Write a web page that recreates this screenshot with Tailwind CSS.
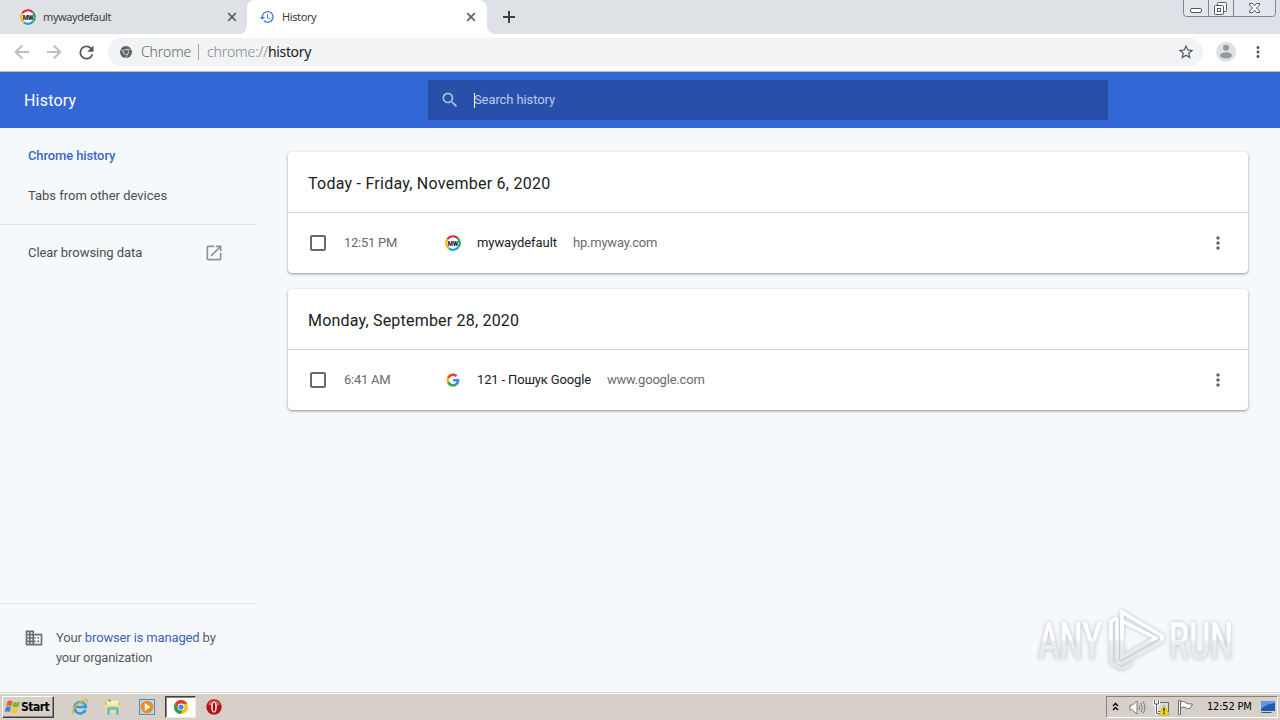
<!DOCTYPE html>
<html lang="en">
<head>
    <meta charset="UTF-8">
    <meta name="viewport" content="width=device-width, initial-scale=1.0">
    <title>History</title>
    <script src="https://cdn.jsdelivr.net/npm/@tailwindcss/browser@4"></script>
</head>
<body class="w-[1280px] h-[720px] overflow-hidden flex flex-col bg-[#f6f9fc] font-['Roboto',sans-serif] text-[13px] text-[#5a5a5a]">
    <!-- Shared icons -->
    <svg class="hidden">
        <symbol id="mw" viewBox="0 0 16 16">
            <circle cx="8" cy="8" r="6.9" fill="#fff"/>
            <g fill="none" stroke-width="2.2">
                <path d="M2.4 4.2A6.8 6.8 0 0 1 12.8 3.2" stroke="#e0203c"/>
                <path d="M12.8 3.2A6.8 6.8 0 0 1 13.2 12.4" stroke="#2fa45a"/>
                <path d="M13.2 12.4A6.8 6.8 0 0 1 3.8 13.3" stroke="#1a9fdc"/>
                <path d="M3.8 13.3A6.8 6.8 0 0 1 2.4 4.2" stroke="#f8b91c"/>
            </g>
            <text x="8" y="10.5" text-anchor="middle" textLength="10.5" lengthAdjust="spacingAndGlyphs" font-family="Roboto, sans-serif" font-weight="900" font-size="7" fill="#1d2733">MW</text>
        </symbol>
        <symbol id="dots" viewBox="0 0 24 24">
            <path d="M12 8c1.1 0 2-.9 2-2s-.9-2-2-2-2 .9-2 2 .9 2 2 2zm0 2c-1.1 0-2 .9-2 2s.9 2 2 2 2-.9 2-2-.9-2-2-2zm0 6c-1.1 0-2 .9-2 2s.9 2 2 2 2-.9 2-2-.9-2-2-2z"/>
        </symbol>
        <symbol id="close" viewBox="0 0 10 10">
            <path d="M1.2 1.2l7.6 7.6M8.8 1.2L1.2 8.8" fill="none" stroke="#5f6368" stroke-width="1.7"/>
        </symbol>
    </svg>

    <!-- Tab strip -->
    <div class="h-[34px] shrink-0 flex bg-[#dee1e6] font-['Noto_Sans',sans-serif] text-[11px] tracking-[-0.4px] text-[#3c4043]">
        <div class="w-[247px] flex items-center pl-5 pr-[10px]">
            <svg class="size-4"><use href="#mw"/></svg>
            <span class="ml-[7px] grow whitespace-nowrap">mywaydefault</span>
            <svg class="size-[10px]"><use href="#close"/></svg>
        </div>
        <div class="relative w-[240px] flex items-center pl-3 pr-[11px] bg-white rounded-t-lg">
            <svg class="absolute -left-2 bottom-0 size-2" viewBox="0 0 8 8"><path d="M8 0v8H0a8 8 0 0 0 8-8z" fill="#fff"/></svg>
            <svg class="absolute -right-2 bottom-0 size-2" viewBox="0 0 8 8"><path d="M0 0v8h8a8 8 0 0 1-8-8z" fill="#fff"/></svg>
            <svg class="size-4" viewBox="0 0 24 24" fill="#3b78e0"><path d="M13 3a9 9 0 0 0-9 9H1l3.89 3.89.07.14L9 12H6c0-3.87 3.13-7 7-7s7 3.13 7 7-3.13 7-7 7c-1.93 0-3.68-.79-4.94-2.06l-1.42 1.42A8.954 8.954 0 0 0 13 21a9 9 0 0 0 0-18zm-1 5v5l4.28 2.54.72-1.21-3.5-2.08V8H12z"/></svg>
            <span class="ml-[7px] grow whitespace-nowrap">History</span>
            <svg class="size-[10px]"><use href="#close"/></svg>
        </div>
        <svg class="w-3 h-[34px] ml-4" viewBox="0 0 12 34"><path d="M6 11v12M0 17h12" stroke="#3c4043" stroke-width="2"/></svg>
        <svg class="ml-auto mr-[3px] w-[94px] h-[18px]" viewBox="0 0 94 18" fill="none">
            <path d="M.5-2v15.500a3 3 0 0 0 3 3h86a3 3 0 0 0 3-3V-2" fill="#e3e6ea" stroke="#81868f"/>
            <path d="M25.500 0v16M50.500 0v16" stroke="#81868f"/>
            <g fill="#fff" stroke="#505766">
                <rect x="7.500" y="8.500" width="11" height="4" rx="1.500"/>
                <rect x="34.500" y="2.500" width="9" height="9" rx="1"/>
                <rect x="31.500" y="5.500" width="9" height="9" rx="1"/>
                <rect x="34.500" y="8.500" width="3" height="3"/>
                <path d="M66.500 3.500h3l2 2.300 2-2.300h3v1.500l-3 3 3 3v1.500h-3l-2-2.300-2 2.300h-3V11l3-3-3-3z"/>
            </g>
        </svg>
    </div>

    <!-- Toolbar -->
    <div class="h-[38px] shrink-0 flex items-center pl-[14px] pr-[14px] pb-px bg-white border-b border-[#b6bfd0]">
        <svg class="size-4" viewBox="0 0 16 16" fill="none" stroke="#bbbdc0" stroke-width="1.900"><path d="M15 8H2M8.200 1.500L1.700 8l6.500 6.500"/></svg>
        <svg class="size-4 ml-4" viewBox="0 0 16 16" fill="none" stroke="#bbbdc0" stroke-width="1.900"><path d="M1 8h13M7.800 1.500L14.300 8l-6.500 6.500"/></svg>
        <svg class="size-[21px] ml-[13.5px]" viewBox="0 0 24 24" fill="#55585d"><path d="M17.650 6.350A7.958 7.958 0 0 0 12 4a8 8 0 1 0 7.730 10h-2.080A5.990 5.990 0 0 1 12 18c-3.310 0-6-2.690-6-6s2.690-6 6-6c1.660 0 3.140.69 4.220 1.780L13 11h7V4l-2.350 2.350z"/></svg>
        <div class="ml-[11.5px] w-[1095px] h-7 flex items-center pl-3 pr-2 rounded-full bg-[#f1f3f4] font-['Noto_Sans',sans-serif] text-[14px] font-light text-[#5f6368]">
            <svg class="size-3" viewBox="0 0 12 12"><circle cx="6" cy="6" r="6" fill="#5f6368"/><g fill="none" stroke="#d8dadc" stroke-width=".8"><circle cx="6" cy="6" r="2.600"/><path d="M6 3.400h5.300M3.700 7.300L1.200 3M8.200 7.400L5.700 11.800"/></g></svg>
            <span class="ml-[9px] -mt-0.5 whitespace-nowrap w-[51px] tracking-[-0.1px]">Chrome</span>
            <span class="ml-[6px] mr-2 w-px h-4 bg-[#a3a6aa]"></span>
            <span class="-mt-0.5 grow whitespace-nowrap tracking-[-0.1px] text-[#80868b]">chrome://<span class="tracking-[-0.35px] text-[#202124] font-normal">history</span></span>
            <svg class="size-[18px]" viewBox="0 0 24 24" fill="#55585d"><path d="M22 9.240l-7.190-.62L12 2 9.190 8.630 2 9.240l5.460 4.730L5.820 21 12 17.270 18.180 21l-1.630-7.030L22 9.240zM12 15.400l-3.760 2.270 1-4.280-3.320-2.880 4.380-.38L12 6.100l1.710 4.040 4.380.38-3.320 2.880 1 4.280L12 15.400z"/></svg>
        </div>
        <svg class="size-5 ml-[13px]" viewBox="0 0 20 20"><circle cx="10" cy="10" r="10" fill="#dfe0e1"/><circle cx="10" cy="5.800" r="3" fill="#96999c"/><ellipse cx="10" cy="13.300" rx="6" ry="3" fill="#96999c"/></svg>
        <svg class="size-[18px] ml-auto -mr-px fill-[#55585d]"><use href="#dots"/></svg>
    </div>

    <!-- App header -->
    <header class="h-14 shrink-0 flex items-center bg-[#3367d6] text-white">
        <h1 class="w-[428px] pl-6 pt-0.5 text-[16px] tracking-[0.2px]">History</h1>
        <div class="w-[680px] h-10 flex items-center pl-3 bg-[#2950a8] text-[#b9cbee]">
            <svg class="size-5" viewBox="0 0 24 24" fill="#a9bfe9"><path d="M15.500 14h-.79l-.28-.27A6.471 6.471 0 0 0 16 9.500 6.500 6.500 0 1 0 9.500 16c1.610 0 3.090-.59 4.230-1.570l.27.28v.79l5 4.990L20.490 19l-4.990-5zm-6 0C7.010 14 5 11.990 5 9.500S7.010 5 9.500 5 14 7.010 14 9.500 11.990 14 9.500 14z"/></svg>
            <span class="ml-[14px] w-px h-[15px] bg-white"></span>
            <span class="-ml-px whitespace-nowrap tracking-[-0.1px]">Search history</span>
        </div>
    </header>

    <div class="grow min-h-0 flex">
        <!-- Sidebar -->
        <aside class="w-[257px] flex flex-col">
            <nav class="pt-2 pb-2 border-b border-[#e0e3e7]">
                <a class="h-10 flex items-center pl-7 font-medium tracking-[-0.12px] text-[#3a68c4]">Chrome history</a>
                <a class="h-10 flex items-center pl-7 tracking-[-0.02px] text-[#4a4d51]">Tabs from other devices</a>
            </nav>
            <a class="h-10 mt-2 flex items-center justify-between pl-7 pr-[33px] tracking-[-0.06px] text-[#4a4d51]">
                <span>Clear browsing data</span>
                <svg class="size-5" viewBox="0 0 24 24" fill="#909397"><path d="M19 19H5V5h7V3H5a2 2 0 0 0-2 2v14a2 2 0 0 0 2 2h14c1.100 0 2-.9 2-2v-7h-2v7zM14 3v2h3.590l-9.830 9.830 1.410 1.410L19 6.410V10h2V3h-7z"/></svg>
            </a>
            <div class="mt-auto h-[89px] flex pt-6 pl-6 border-t border-[#e5e8eb]">
                <svg class="size-5" viewBox="0 0 24 24" fill="#6b6f74"><path d="M12 7V3H2v18h20V7H12zM6 19H4v-2h2v2zm0-4H4v-2h2v2zm0-4H4V9h2v2zm0-4H4V5h2v2zm4 12H8v-2h2v2zm0-4H8v-2h2v2zm0-4H8V9h2v2zm0-4H8V5h2v2zm10 12h-8v-2h2v-2h-2v-2h2v-2h-2V9h8v10zm-2-8h-2v2h2v-2zm0 4h-2v2h2v-2z"/></svg>
                <p class="ml-3 leading-5 whitespace-nowrap tracking-[-0.15px]">Your <a class="text-[#3b62b8]">browser is managed</a> by<br><span class="tracking-[-0.24px]">your organization</span></p>
            </div>
        </aside>

        <!-- History cards -->
        <main class="relative grow pl-[31px] pt-6">
            <section class="w-[960px] h-[121px] mb-4 bg-white rounded-[4px] shadow-[0_1px_2px_rgba(60,64,67,.4),0_1px_3px_1px_rgba(60,64,67,.12)]">
                <h2 class="h-[61px] flex items-center pt-[3px] pl-5 border-b border-[#d4d6d9] text-[16px] tracking-[0.25px] text-[#202124]">Today - Friday, November 6, 2020</h2>
                <div class="h-[60px] flex items-center pl-[22px] pr-5">
                    <span class="size-4 border-2 border-[#6a6a6a] rounded-[2px]"></span>
                    <span class="ml-[18px] w-[101px] tracking-[-0.27px] text-[#6b6b6b]">12:51 PM</span>
                    <svg class="size-4"><use href="#mw"/></svg>
                    <span class="ml-4 tracking-[-0.07px] text-[#202124]">mywaydefault</span>
                    <span class="ml-4 tracking-[-0.2px] text-[#6b6b6b]">hp.myway.com</span>
                    <svg class="ml-auto size-5 fill-[#5f6368]"><use href="#dots"/></svg>
                </div>
            </section>
            <section class="w-[960px] h-[121px] bg-white rounded-[4px] shadow-[0_1px_2px_rgba(60,64,67,.4),0_1px_3px_1px_rgba(60,64,67,.12)]">
                <h2 class="h-[61px] flex items-center pt-[3px] pl-5 border-b border-[#d4d6d9] text-[16px] tracking-[0.2px] text-[#202124]">Monday, September 28, 2020</h2>
                <div class="h-[60px] flex items-center pl-[22px] pr-5">
                    <span class="size-4 border-2 border-[#6a6a6a] rounded-[2px]"></span>
                    <span class="ml-[18px] w-[101px] tracking-[-0.27px] text-[#6b6b6b]">6:41 AM</span>
                    <svg class="size-4" viewBox="-5 -5 58 58"><path fill="#ea4335" d="M24 9.500c3.540 0 6.710 1.220 9.210 3.600l6.850-6.850C35.900 2.380 30.470 0 24 0 14.620 0 6.510 5.380 2.560 13.220l7.980 6.190C12.430 13.720 17.740 9.500 24 9.500z"/><path fill="#4285f4" d="M46.980 24.550c0-1.570-.15-3.090-.38-4.550H24v9.020h12.940c-.58 2.960-2.260 5.480-4.780 7.180l7.730 6c4.510-4.180 7.090-10.360 7.090-17.650z"/><path fill="#fbbc05" d="M10.530 28.590c-.48-1.450-.76-2.990-.76-4.590s.27-3.140.76-4.590l-7.980-6.190C.92 16.460 0 20.120 0 24s.92 7.540 2.560 10.780l7.970-6.190z"/><path fill="#34a853" d="M24 48c6.480 0 11.930-2.130 15.890-5.810l-7.730-6c-2.150 1.450-4.920 2.300-8.160 2.300-6.260 0-11.570-4.220-13.470-9.910l-7.980 6.190C6.510 42.620 14.620 48 24 48z"/></svg>
                    <span class="ml-4 tracking-[-0.15px] text-[#202124]">121 - Пошук Google</span>
                    <span class="ml-4 tracking-[-0.2px] text-[#6b6b6b]">www.google.com</span>
                    <svg class="ml-auto size-5 fill-[#5f6368]"><use href="#dots"/></svg>
                </div>
            </section>
            <!-- Watermark over the page -->
            <svg class="absolute right-[34px] bottom-[14px] w-[218px] h-[76px] overflow-visible drop-shadow-[0_0_2px_rgba(90,100,110,.4)]" viewBox="1028 602 218 76">
                <defs><linearGradient id="wm" gradientUnits="userSpaceOnUse" x1="0" y1="610" x2="0" y2="670"><stop offset=".5" stop-color="#fff"/><stop offset=".52" stop-color="#ebedef"/><stop offset="1" stop-color="#e2e5e7"/></linearGradient></defs>
                <g font-family="Roboto, sans-serif" font-weight="500" font-size="52" fill="url(#wm)">
                    <text x="1038" y="659" textLength="64" lengthAdjust="spacingAndGlyphs">ANY</text>
                    <text x="1169" y="659" textLength="64" lengthAdjust="spacingAndGlyphs">RUN</text>
                </g>
                <g fill="none" stroke="url(#wm)" stroke-width="3.500">
                    <path d="M1122 636v-24l40 24v5l-39 22"/>
                    <path d="M1122 621l34 17-34 19z"/>
                    <path d="M1117 618l-6 3v42l11 6 10-6"/>
                    <path d="M1117 618v44l6 2"/>
                </g>
            </svg>
        </main>
    </div>

    <!-- Taskbar -->
    <footer class="h-7 shrink-0 flex items-center pt-px pl-[2px] bg-[#d6d0c8] border-t border-[#d6d0c8] shadow-[inset_0_1px_0_#fff] font-['DejaVu_Sans_Condensed','DejaVu_Sans',sans-serif] text-[11px] text-black">
        <div class="w-[52px] h-[22px] flex items-center pl-[2px] border border-t-white border-l-white border-r-[#404040] border-b-[#404040] shadow-[inset_-1px_-1px_0_#8a867f]">
            <svg class="size-4 shrink-0" viewBox="0 0 16 16"><path d="M2.500 2.500Q5 .5 7.600 2.400L6.300 7.300Q3.800 5.600 1.200 7.300z" fill="#e8602c"/><path d="M8.500 2.800q3 1.600 6.500-.2l-1.400 5Q10.500 9.200 7.200 7.600z" fill="#78b82f"/><path d="M1 8.300q2.500-1.700 5-.1L4.700 13Q2.400 11.400-.2 13z" fill="#3d83d0"/><path d="M6.900 8.700q3.200 1.600 6.400 0L12 13.500q-3 1.700-6.400-.1z" fill="#f8c52a"/></svg>
            <span class="text-[12px] font-bold tracking-[-0.5px]">Start</span>
        </div>
        <svg class="ml-[17px] size-[18px]" viewBox="0 0 18 18" fill="none"><path d="M14.500 11.800A5.700 5.700 0 1 1 14.800 9H4.500" stroke="#2d9be3" stroke-width="2.600"/><path d="M5.500 6.500A5 5 0 0 1 12.500 6" stroke="#8dd3f7"/><path d="M2.200 16.300C-.7 13.200 6 5.200 12.200 2.200c4-1.700 4.700.2 3.400 2.800" stroke="#e9b729" stroke-width="1.500"/></svg>
        <svg class="ml-[15px] size-[18px]" viewBox="0 0 18 18"><path d="M1 3.500h5l1 1.500h9v10H1z" fill="#e6c364"/><path d="M3 2.500h11V8H3z" fill="#fbefb4"/><path d="M4 2.500h3" stroke="#4eb05b" stroke-width="1.500"/><path d="M1 7h15.500v8H1z" fill="#f6dd83"/><path d="M3 16.500V11q0-2 2-2h8q2 0 2 2v5.500h-3V12H6v4.500z" fill="#67bde4"/></svg>
        <svg class="ml-4 size-[18px]" viewBox="0 0 18 18"><rect x="1.500" y="1.500" width="15" height="15" fill="#b9d8f0" stroke="#508bc4"/><circle cx="9" cy="9" r="6.300" fill="#f28a1c"/><path d="M6.800 5l5.700 4-5.700 4z" fill="#fff"/></svg>
        <div class="ml-[9px] w-[31px] h-[22px] flex items-center justify-center bg-white border border-t-[#404040] border-l-[#404040] border-r-[#ece9e4] border-b-[#ece9e4] shadow-[inset_1px_1px_0_#8a867f]">
            <svg class="size-[14px]" viewBox="0 0 14 14"><circle cx="7" cy="7" r="7" fill="#fbc116"/><path d="M7 7V3.700h6.200A7 7 0 0 0 .9 3.500L4 8.800z" fill="#df3b2f"/><path d="M7 7L4 8.700.9 3.500A7 7 0 0 0 6.600 14l3.200-5.400z" fill="#2f9e4f"/><circle cx="7" cy="7" r="3.400" fill="#fff"/><circle cx="7" cy="7" r="2.600" fill="#4285f4"/></svg>
        </div>
        <svg class="ml-[10px] size-4" viewBox="0 0 16 16"><circle cx="8" cy="8" r="7.700" fill="#b4151b"/><path d="M2 5.500a6.500 6.500 0 0 1 12 0q-6 3-12 0z" fill="#dc5a55"/><ellipse cx="8" cy="8" rx="2.800" ry="5.600" fill="#fff"/><ellipse cx="8" cy="8" rx="1.300" ry="4.600" fill="#9a1016"/></svg>
        <div class="ml-auto mr-[2px] w-[172px] h-[22px] flex items-center pl-[5px] border border-t-[#87837c] border-l-[#87837c] border-r-white border-b-white">
            <svg class="w-[7px] h-[18px]" viewBox="0 0 7 18" fill="none" stroke="#000" stroke-width="1.400"><path d="M1 8l2.500-2.500L6 8M1 12l2.500-2.500L6 12"/></svg>
            <svg class="ml-[10px] size-[17px]" viewBox="0 0 17 17" fill="none" stroke="#77777a"><path d="M1 6h2.500L8 2v13l-4.500-4H1z" fill="#fff"/><path d="M10 6q1.500 2.500 0 5M12 4q3 4.500 0 9M14 2.500q4 6 0 12"/></svg>
            <svg class="ml-[7px] size-[17px]" viewBox="0 0 17 17"><rect x="4.500" y="3.500" width="11" height="9" fill="#d9dadb" stroke="#66696c"/><path d="M1.500 1v4h4V1M3.500 5v9.500H7" fill="none" stroke="#fff" stroke-width="3"/><path d="M1.500 1v4h4V1M3.500 5v9.500H7" fill="none" stroke="#5c5f62"/><path d="M11 6l5.500 10h-11z" fill="#f9d720" stroke="#b69a17" stroke-width=".6"/><path d="M11 9v3.500M11 13.500V15" stroke="#222" stroke-width="1.300"/></svg>
            <svg class="ml-[7px] size-[17px]" viewBox="0 0 17 17" fill="#fff" stroke="#6b6b6d"><path d="M1.500 1.500h2v14h-2z"/><path d="M3.500 3q3-1.500 5 .5t7 1.500q-1 2-2.500 4.500-2.500.5-4.500-.9T3.500 9z"/></svg>
            <span class="ml-[13px] w-[46px] whitespace-nowrap tracking-[-0.2px]">12:52 PM</span>
            <svg class="ml-[7px] w-4 h-[14px] shrink-0" viewBox="0 0 16 14"><path d="M1 1h14v10H1z" fill="#2459b4"/><path d="M1 1h14v2Q6 4 1 9z" fill="#5f9ae0"/><path d="M1.500 12.500h10" stroke="#31568c"/></svg>
        </div>
    </footer>
</body>
</html>
